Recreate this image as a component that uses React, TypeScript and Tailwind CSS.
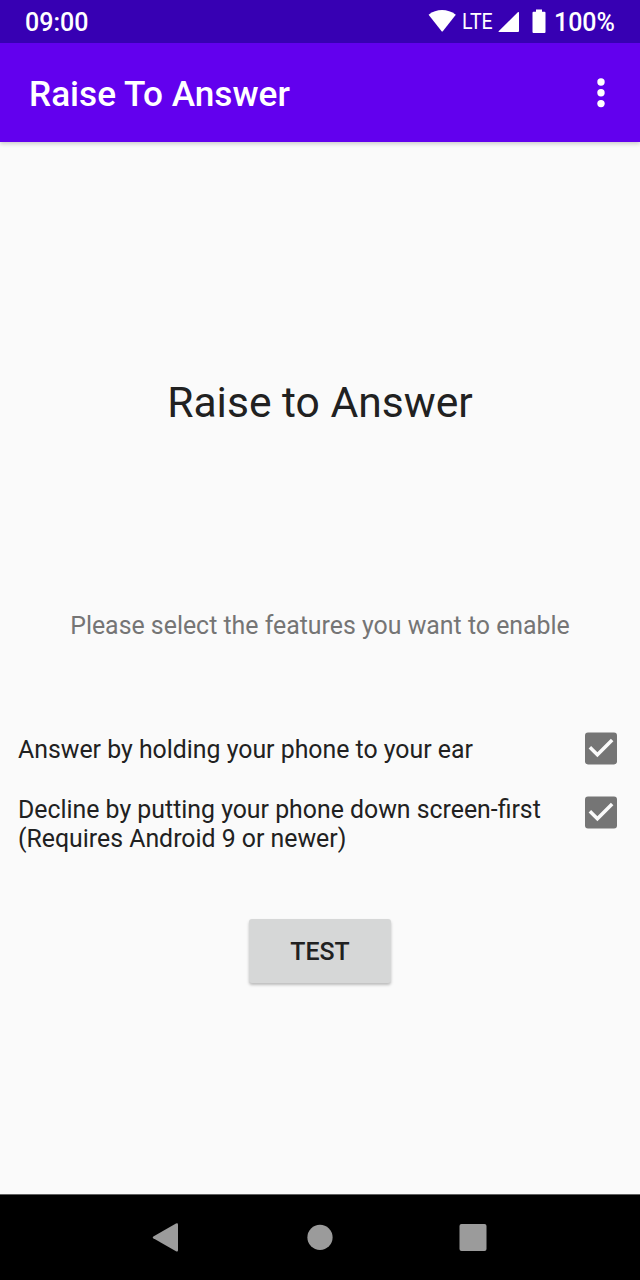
export default function App() {
  return (
    <div className="flex h-[1280px] w-[640px] flex-col overflow-hidden bg-[#fafafa] font-['Roboto',sans-serif] text-[#212121]">
      <header className="z-10 shrink-0 shadow-[0_2px_4px_rgba(0,0,0,0.18)]">
        <div className="flex h-[43px] items-center justify-between bg-[#3700b3] pl-[25px] pr-[25px] text-white">
          <span className="pt-[2px] text-[25px] font-medium leading-[44px]">09:00</span>
          <div className="flex h-[43px] items-start">
            <svg className="mt-[10px] h-[22px] w-[28px]" viewBox="0 0 28 22" fill="currentColor">
              <path d="M.6 4.7C8.5-1.5 19.5-1.5 27.8 4.7L15 21Q14.2 22 13.4 21Z" />
            </svg>
            <span className="ml-[6px] w-[31px] origin-left scale-x-[0.89] text-[22px] leading-[43px]">LTE</span>
            <svg className="ml-[5px] mt-[11px] h-[21px] w-[22px]" viewBox="0 0 22 21" fill="currentColor">
              <path d="M1 21Q0 21 .9 20.1L19.8 1.2Q21 .5 21 1.5V20Q21 21 20 21Z" />
            </svg>
            <svg className="ml-[12px] mt-[9px] h-[25px] w-[14px]" viewBox="0 -.5 14 25" fill="currentColor">
              <path d="M4 0H10V2.3H12.5Q13.5 2.3 13.5 3.3V22.5Q13.5 23.5 12.5 23.5H1.5Q.5 23.5 .5 22.5V3.3Q.5 2.3 1.5 2.3H4Z" />
            </svg>
            <span className="ml-[8px] pt-px text-[25px] font-medium leading-[43px]">100%</span>
          </div>
        </div>
        <div className="flex h-[99px] items-center justify-between bg-[#6200ee] pl-[29px] pr-[35px] text-white">
          <h1 className="pt-[3px] text-[35.2px] font-medium leading-[99px]">Raise To Answer</h1>
          <button aria-label="More options">
            <svg className="h-[30px] w-[8px]" viewBox="0 0 8 30" fill="currentColor">
              <circle cx="4" cy="4" r="3.7" />
              <circle cx="4" cy="14.8" r="3.7" />
              <circle cx="4" cy="25.6" r="3.7" />
            </svg>
          </button>
        </div>
      </header>
      <main className="flex flex-1 flex-col items-center">
        <h2 className="mt-[235px] whitespace-nowrap text-[42.6px] leading-[50px]">Raise to Answer</h2>
        <p className="mt-[184px] whitespace-nowrap text-[24.89px] leading-[30px] text-[#757575]">Please select the features you want to enable</p>
        <div className="mt-[91px] flex w-full flex-col pl-[18px] pr-[23px] text-[24.85px] leading-[29px]">
          <div className="flex h-[32px] items-start justify-between">
            <span className="whitespace-nowrap pt-[3px]">Answer by holding your phone to your ear</span>
            <Check />
          </div>
          <div className="mt-[31px] flex items-start justify-between">
            <span className="whitespace-nowrap">Decline by putting your phone down screen-first<br />(Requires Android 9 or newer)</span>
            <div className="pt-px"><Check /></div>
          </div>
        </div>
        <button className="mt-[66px] h-[64px] w-[142px] rounded-[3px] bg-[#d6d7d7] pt-px text-[24.89px] font-medium shadow-[0_2px_3px_rgba(0,0,0,0.25)]">TEST</button>
      </main>
      <nav className="flex h-[86px] shrink-0 items-start justify-center border-t border-[#606060] bg-black pt-[27px]">
        <svg className="h-[30px] w-[336px]" viewBox="0 0 336 30" fill="#9b9b9b">
          <path d="M1.3 14.4L24 1.4Q26 .7 26 2.5V28.3Q26 30 24 29.3L1.3 16.3Q0 15.3 1.3 14.4Z" />
          <circle cx="168" cy="15.4" r="12.6" />
          <rect x="307.5" y="2" width="27" height="27" rx="2" />
        </svg>
      </nav>
    </div>
  );
}

function Check() {
  return (
    <svg className="h-[33px] w-[32px] shrink-0" viewBox="0 -.4 32 33">
      <rect width="32" height="32" rx="3" fill="#757575" />
      <path d="M12.4 24.9L3.6 16L6.1 13.5L12.4 19.9L25.9 6.4L28.4 8.9Z" fill="#fafafa" />
    </svg>
  );
}
